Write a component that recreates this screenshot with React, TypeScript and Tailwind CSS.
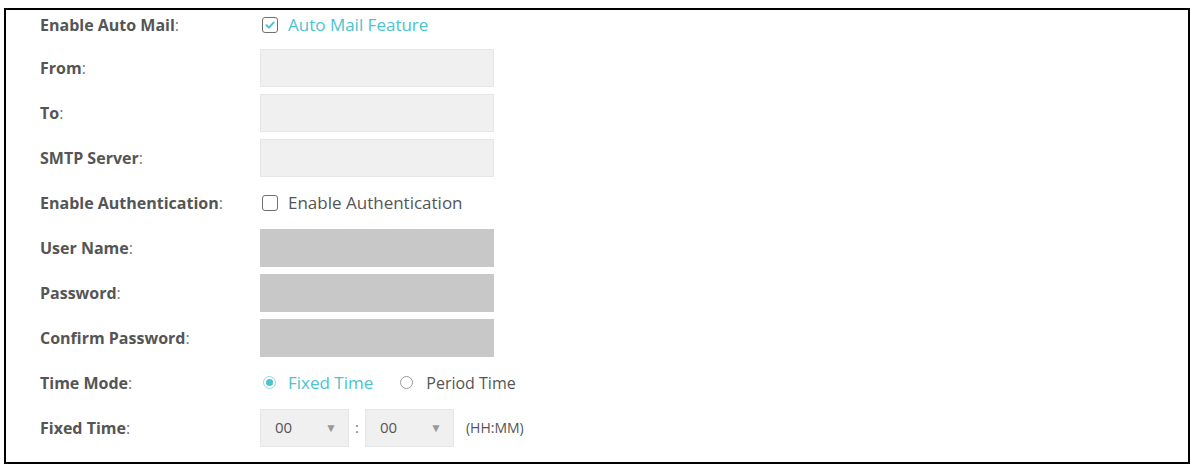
import React from "react";

const font = { fontFamily: '"Open Sans", "Liberation Sans", sans-serif' };

function Label({ text }: { text: string }) {
  return (
    <div className="w-[220px] shrink-0 text-[16px] text-[#555]">
      <span className="font-bold">{text}</span>
      <span className="text-[#777]">:</span>
    </div>
  );
}

function Row({ label, children, first }: { label: string; children?: React.ReactNode; first?: boolean }) {
  return (
    <div className={`flex items-center ${first ? "h-[30px]" : "h-[45px]"}`}>
      <Label text={label} />
      <div className="flex items-center">{children}</div>
    </div>
  );
}

function TextBox({ disabled }: { disabled?: boolean }) {
  return (
    <div
      className={`w-[234px] h-[38px] ${disabled ? "bg-[#c8c8c8]" : "bg-[#f0f0f0] border border-[#e6e6e6]"}`}
    />
  );
}

function Check({ checked }: { checked?: boolean }) {
  return (
    <div className="ml-[2px] w-[16px] h-[16px] rounded-[3px] border-[1.5px] border-[#6f6f6f] bg-white flex items-center justify-center">
      {checked && (
        <svg width="10" height="10" viewBox="0 0 10 10">
          <path d="M1.5 5.2 L4 7.6 L8.6 2.6" fill="none" stroke="#4cc3d0" strokeWidth="2" strokeLinecap="round" strokeLinejoin="round" />
        </svg>
      )}
    </div>
  );
}

function Radio({ checked }: { checked?: boolean }) {
  return (
    <div
      className={`w-[13px] h-[13px] rounded-full border flex items-center justify-center ${
        checked ? "border-[#8fd9e1]" : "border-[#9a9a9a]"
      }`}
    >
      {checked && <div className="w-[7px] h-[7px] rounded-full bg-[#4cc3d0]" />}
    </div>
  );
}

function Select() {
  return (
    <div className="w-[89px] h-[38px] bg-[#f0f0f0] border border-[#e6e6e6] flex items-center pl-[14px] text-[15px] text-[#555]">
      <span className="w-[50px]">00</span>
      <span className="text-[#999] text-[12px]">▼</span>
    </div>
  );
}

export default function App() {
  return (
    <div className="w-[1190px] h-[465px] bg-white pt-[8px] pl-[4px]" style={font}>
      <div className="w-[1186px] h-[456px] border-2 border-black pl-[34px]">
        <Row label="Enable Auto Mail" first>
          <Check checked />
          <span className="ml-[10px] text-[17px] text-[#4cc3d0]">Auto Mail Feature</span>
        </Row>
        <div className="mt-[5px]">
          <Row label="From">
            <TextBox />
          </Row>
          <Row label="To">
            <TextBox />
          </Row>
          <Row label="SMTP Server">
            <TextBox />
          </Row>
          <Row label="Enable Authentication">
            <Check />
            <span className="ml-[10px] text-[17px] text-[#555]">Enable Authentication</span>
          </Row>
          <Row label="User Name">
            <TextBox disabled />
          </Row>
          <Row label="Password">
            <TextBox disabled />
          </Row>
          <Row label="Confirm Password">
            <TextBox disabled />
          </Row>
          <Row label="Time Mode">
            <div className="ml-[3px] flex items-center">
              <Radio checked />
              <span className="ml-[12px] text-[17px] text-[#4cc3d0]">Fixed Time</span>
            </div>
            <div className="ml-[27px] flex items-center">
              <Radio />
              <span className="ml-[13px] text-[16px] text-[#555]">Period Time</span>
            </div>
          </Row>
          <Row label="Fixed Time">
            <Select />
            <span className="mx-[6px] text-[15px] text-[#777]">:</span>
            <Select />
            <span className="ml-[12px] text-[14px] text-[#555]">(HH:MM)</span>
          </Row>
        </div>
      </div>
    </div>
  );
}
